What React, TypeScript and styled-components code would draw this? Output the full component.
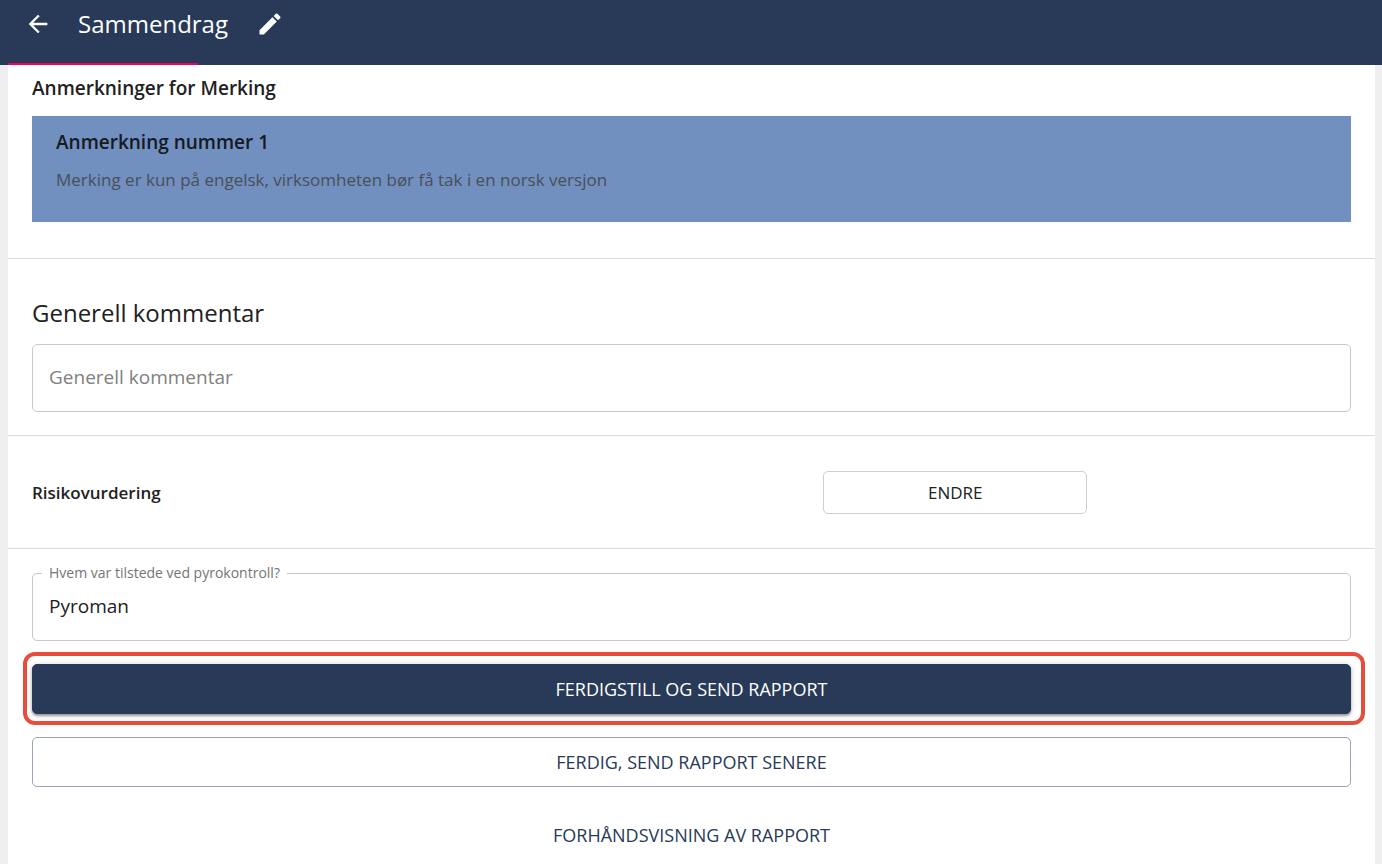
import React from "react";
import styled, { createGlobalStyle } from "styled-components";

const navy = "#283a58";
const ink = "#212121";
const line = "#dcdcdc";

const GlobalStyle = createGlobalStyle`
  *, *::before, *::after { box-sizing: border-box; }
  body {
    margin: 0;
    background: #efefef;
    color: ${ink};
    font-family: "Open Sans", "Noto Sans", sans-serif;
    font-size: 17px;
    line-height: 24px;
  }
  button, input, textarea { font: inherit; color: inherit; }
`;

const Page = styled.div`
  min-height: 100vh;
  display: flex;
  flex-direction: column;
`;

const AppBar = styled.header`
  height: 65px;
  display: flex;
  flex-direction: column;
  background: ${navy};
  color: #fff;
`;

const Toolbar = styled.div`
  flex: 1;
  display: flex;
  align-items: flex-start;
  padding: 8px 22px;
`;

const IconButton = styled.button`
  display: flex;
  padding: 2px;
  border: 0;
  background: none;
  cursor: pointer;
`;

const Title = styled.h1`
  margin: 0 26px 0 24px;
  font-size: 24px;
  line-height: 32px;
  font-weight: 500;
`;

const Progress = styled.div`
  width: 190px;
  height: 2px;
  margin-left: 8px;
  background: #f50057;
`;

const Sheet = styled.main`
  flex: 1;
  margin: 0 7px 0 8px;
  background: #fff;
`;

const Section = styled.section<{ $top: number; $bottom: number }>`
  padding: ${(p) => p.$top}px 24px ${(p) => p.$bottom}px;

  & + & {
    border-top: 1px solid ${line};
  }
`;

const Heading = styled.h2<{ $large?: boolean }>`
  margin: 0 0 ${(p) => (p.$large ? 15 : 16)}px;
  font-size: ${(p) => (p.$large ? 24 : 19)}px;
  line-height: ${(p) => (p.$large ? 32 : 24)}px;
  font-weight: ${(p) => (p.$large ? 500 : 600)};
`;

const Remark = styled.article`
  padding: 14px 24px 30px;
  background: #7190bf;
`;

const RemarkTitle = styled.h3`
  margin: 0 0 14px;
  color: #151a22;
  font-size: 19px;
  line-height: 24px;
  font-weight: 600;
`;

const RemarkText = styled.p`
  margin: 0;
  color: #4a4f58;
`;

const Field = styled.div`
  position: relative;
  display: flex;
`;

const FieldLabel = styled.label`
  position: absolute;
  top: -10px;
  left: 10px;
  padding: 0 7px;
  background: #fff;
  color: #757575;
  font-size: 14px;
  line-height: 20px;
`;

const TextArea = styled.textarea`
  flex: 1;
  height: 68px;
  padding: 20px 16px;
  border: 1px solid #c8c8c8;
  border-radius: 5px;
  background: none;
  font-size: 19px;
  line-height: 24px;
  resize: none;
  overflow: hidden;

  &::placeholder {
    color: #808080;
    opacity: 1;
  }
`;

const RiskRow = styled.div`
  display: grid;
  grid-template-columns: 3fr 1fr 1fr;
  align-items: center;
`;

const RiskTitle = styled.h2`
  margin: 0;
  font-size: 17px;
  line-height: 24px;
  font-weight: 600;
`;

const Button = styled.button<{ $kind: "neutral" | "filled" | "outlined" | "text" }>`
  display: block;
  width: 100%;
  height: ${(p) => (p.$kind === "neutral" ? 43 : 50)}px;
  padding: 0 16px;
  border: 1px solid
    ${(p) => ({ neutral: "#cfcfcf", filled: navy, outlined: "#9ba4b3", text: "transparent" })[p.$kind]};
  border-radius: 5px;
  background: ${(p) => (p.$kind === "filled" ? navy : "transparent")};
  color: ${(p) => ({ neutral: ink, filled: "#fff", outlined: navy, text: navy })[p.$kind]};
  box-shadow: ${(p) =>
    p.$kind === "filled" ? "0 2px 2px rgba(0, 0, 0, 0.3), 0 1px 6px rgba(0, 0, 0, 0.2)" : "none"};
  font-size: ${(p) => (p.$kind === "neutral" ? 17 : 18)}px;
  font-weight: 500;
  text-transform: uppercase;
  cursor: pointer;
`;

const Actions = styled.div`
  display: grid;
  gap: 23px;
  margin-top: 23px;
`;

const Highlight = styled.div`
  position: relative;

  &::after {
    content: "";
    position: absolute;
    inset: -12px -14px -11px -9px;
    border: 4px solid #e74c3c;
    border-radius: 12px;
    pointer-events: none;
  }
`;

export default function App() {
  return (
    <Page>
      <GlobalStyle />
      <AppBar>
        <Toolbar>
          <IconButton type="button" aria-label="Tilbake">
            <svg width="28" height="28" viewBox="0 0 24 24" fill="currentColor" aria-hidden="true">
              <path d="M20 11H7.83l5.59-5.59L12 4l-8 8 8 8 1.41-1.41L7.83 13H20v-2z" />
            </svg>
          </IconButton>
          <Title>Sammendrag</Title>
          <IconButton type="button" aria-label="Rediger">
            <svg width="28" height="28" viewBox="0 0 24 24" fill="currentColor" aria-hidden="true">
              <path d="M3 17.25V21h3.75L17.81 9.94l-3.75-3.75L3 17.25zM20.71 7.04c.39-.39.39-1.02 0-1.41l-2.34-2.34a.9959.9959 0 0 0-1.41 0l-1.83 1.83 3.75 3.75 1.83-1.83z" />
            </svg>
          </IconButton>
        </Toolbar>
        <Progress />
      </AppBar>
      <Sheet>
        <Section $top={11} $bottom={36}>
          <Heading>Anmerkninger for Merking</Heading>
          <Remark>
            <RemarkTitle>Anmerkning nummer 1</RemarkTitle>
            <RemarkText>Merking er kun på engelsk, virksomheten bør få tak i en norsk versjon</RemarkText>
          </Remark>
        </Section>
        <Section $top={38} $bottom={23}>
          <Heading $large>Generell kommentar</Heading>
          <Field>
            <TextArea aria-label="Generell kommentar" placeholder="Generell kommentar" rows={1} />
          </Field>
        </Section>
        <Section $top={35} $bottom={34}>
          <RiskRow>
            <RiskTitle>Risikovurdering</RiskTitle>
            <Button type="button" $kind="neutral">Endre</Button>
          </RiskRow>
        </Section>
        <Section $top={24} $bottom={0}>
          <Field>
            <FieldLabel htmlFor="present">Hvem var tilstede ved pyrokontroll?</FieldLabel>
            <TextArea id="present" defaultValue="Pyroman" rows={1} />
          </Field>
          <Actions>
            <Highlight>
              <Button type="button" $kind="filled">Ferdigstill og send rapport</Button>
            </Highlight>
            <Button type="button" $kind="outlined">Ferdig, send rapport senere</Button>
            <Button type="button" $kind="text">Forhåndsvisning av rapport</Button>
          </Actions>
        </Section>
      </Sheet>
    </Page>
  );
}
